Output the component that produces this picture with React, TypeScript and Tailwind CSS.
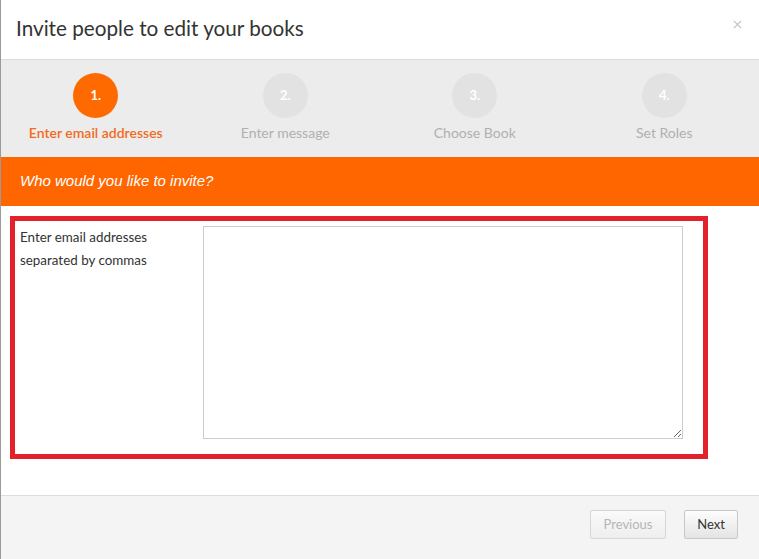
import { X } from "lucide-react";

const steps = [
  { n: "1.", label: "Enter email addresses", active: true },
  { n: "2.", label: "Enter message", active: false },
  { n: "3.", label: "Choose Book", active: false },
  { n: "4.", label: "Set Roles", active: false },
];

export default function App() {
  return (
    <div className="w-[759px] h-[559px] flex flex-col bg-white border-l border-[#9a9a9a] font-['Lato',sans-serif] overflow-hidden">
      {/* header */}
      <div className="h-[60px] shrink-0 border-b border-[#dcdcdc] flex items-center justify-between pl-[15px] pr-[15px]">
        <h1 className="text-[20.7px] text-[#333] pb-[1px]">Invite people to edit your books</h1>
        <button className="text-[#c4c4c4] -mt-[10px]">
          <X className="w-[13px] h-[13px]" strokeWidth={2} />
        </button>
      </div>

      {/* steps */}
      <div className="h-[97px] shrink-0 bg-[#ececec] grid grid-cols-4">
        {steps.map((s) => (
          <div key={s.n} className="flex flex-col items-center pt-[13px]">
            <div
              className={
                s.active
                  ? "w-[45px] h-[45px] rounded-full bg-[#ff6a00] flex items-center justify-center text-white text-[13px] font-bold"
                  : "w-[45px] h-[45px] rounded-full bg-[#e2e2e2] flex items-center justify-center text-white text-[13px] font-bold"
              }
            >
              {s.n}
            </div>
            <p
              className={
                s.active
                  ? "mt-[4px] text-[14px] font-semibold text-[#f26a1b]"
                  : "mt-[4px] text-[14px] text-[#b0b0b0]"
              }
            >
              {s.label}
            </p>
          </div>
        ))}
      </div>

      {/* section title */}
      <div className="h-[49px] shrink-0 bg-[#ff6600] flex items-center px-[19px]">
        <p className="italic text-white text-[15px] font-['Liberation_Sans',Arial,sans-serif]">
          Who would you like to invite?
        </p>
      </div>

      {/* body */}
      <div className="flex-1 pt-[10px] pl-[9px]">
        <div className="w-[698px] h-[243px] border-[5px] border-[#e3212b] flex pt-[5px] pl-[5px]">
          <label className="w-[183px] shrink-0 text-[13.4px] leading-[23px] text-[#333]">
            Enter email addresses
            <br />
            separated by commas
          </label>
          <textarea className="w-[480px] h-[213px] border border-[#cccccc] bg-white resize-y outline-none" />
        </div>
      </div>

      {/* footer */}
      <div className="h-[64px] shrink-0 border-t border-[#dddddd] bg-[#f4f4f4] flex justify-end items-start pt-[14px] pr-[21px] gap-[18px]">
        <button
          disabled
          className="h-[29px] w-[76px] rounded-[2px] border border-[#d6d6d6] bg-gradient-to-b from-[#fafafa] to-[#eeeeee] text-[13px] text-[#b5b5b5]"
        >
          Previous
        </button>
        <button className="h-[29px] w-[54px] rounded-[2px] border border-[#c8c8c8] bg-gradient-to-b from-[#fdfdfd] to-[#e4e4e4] text-[13px] text-[#333]">
          Next
        </button>
      </div>
    </div>
  );
}
